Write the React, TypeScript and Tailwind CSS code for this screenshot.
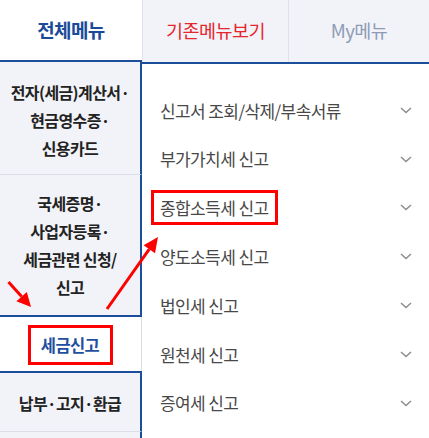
import React from "react";

function Chevron() {
  return (
    <svg width="12" height="7" viewBox="0 0 12 7" className="shrink-0">
      <polyline points="1,1 6,5.5 11,1" fill="none" stroke="#8d8d8d" strokeWidth="1.5" />
    </svg>
  );
}

const rightItems = [
  "신고서 조회/삭제/부속서류",
  "부가가치세 신고",
  "종합소득세 신고",
  "양도소득세 신고",
  "법인세 신고",
  "원천세 신고",
  "증여세 신고",
];

export default function App() {
  return (
    <div
      className="relative w-[429px] h-[438px] overflow-hidden bg-white"
      style={{ fontFamily: "'Noto Sans CJK KR', 'Noto Sans', sans-serif" }}
    >
      {/* Tabs */}
      <div className="flex h-[62px]">
        <div className="w-[142px] bg-white border-b-2 border-[#1d4e9c] flex items-center justify-center text-[19px] font-bold text-[#1b4a99] tracking-[-0.6px]">
          전체메뉴
        </div>
        <div className="w-[146px] bg-[#f2f3f9] border-l border-[#dfe2ea] flex items-center justify-center text-[18.5px] text-[#e5262c] tracking-[-0.5px]">
          기존메뉴보기
        </div>
        <div className="flex-1 bg-[#f2f3f9] border-l border-[#dfe2ea] flex items-center justify-center text-[18.5px] text-[#8d9cb6] tracking-[-0.5px]">
          My메뉴
        </div>
      </div>

      {/* Body */}
      <div className="flex h-[376px]">
        {/* Left column */}
        <div className="w-[142px] flex flex-col text-[16px] font-bold text-[#222] leading-[28px] tracking-[-0.6px] text-center">
          <div className="h-[113px] bg-[#f2f3f8] border-r-2 border-r-[#1d4e9c] border-b border-b-[#dcdfe7] flex flex-col items-center justify-center pt-[3px]">
            <div>전자(세금)계산서·</div>
            <div>현금영수증·</div>
            <div>신용카드</div>
          </div>
          <div className="h-[142px] bg-[#f2f3f8] border-r-2 border-r-[#1d4e9c] border-b-2 border-b-[#1d4e9c] flex flex-col items-center justify-center">
            <div>국세증명·</div>
            <div>사업자등록·</div>
            <div>세금관련 신청/</div>
            <div>신고</div>
          </div>
          <div className="h-[54px] bg-white border-r border-r-[#d9dce3] flex items-center justify-center pr-[1px]">
            <div className="w-[85px] h-[40px] border-[3px] border-[#ff0000] flex items-center justify-center text-[#1f4f9f] text-[16.5px] mt-[2px]">
              세금신고
            </div>
          </div>
          <div className="h-[61px] bg-[#f2f3f8] border-r-2 border-r-[#1d4e9c] border-t-2 border-t-[#1d4e9c] border-b border-b-[#dcdfe7] flex items-center justify-center pt-[2px]">
            납부·고지·환급
          </div>
          <div className="flex-1 bg-[#f2f3f8] border-r-2 border-r-[#1d4e9c]" />
        </div>

        {/* Right panel */}
        <div className="flex-1 border-t-2 border-t-[#1d4e9c] pt-[22px] text-[17px] text-[#484848] tracking-[-0.6px]">
          {rightItems.map((t, i) => (
            <div key={t} className="h-[48.8px] flex items-center justify-between pr-[17px]">
              {i === 2 ? (
                <span className="ml-[9px] h-[35px] border-[3px] border-[#ff0000] px-[6px] flex items-center">
                  {t}
                </span>
              ) : (
                <span className="pl-[18px]">{t}</span>
              )}
              <Chevron />
            </div>
          ))}
        </div>
      </div>

      {/* Annotation arrows */}
      <svg
        className="absolute inset-0 pointer-events-none"
        width="429"
        height="438"
        viewBox="0 0 429 438"
      >
        <line x1="8.5" y1="282" x2="21.6" y2="296.6" stroke="#ff0000" strokeWidth="3" />
        <polygon points="31,307 16.4,301.3 26.8,291.9" fill="#ff0000" />
        <line x1="107" y1="309" x2="149.3" y2="249.2" stroke="#ff0000" strokeWidth="3" />
        <polygon points="158,237 155,253.3 143.6,245.2" fill="#ff0000" />
      </svg>
    </div>
  );
}
